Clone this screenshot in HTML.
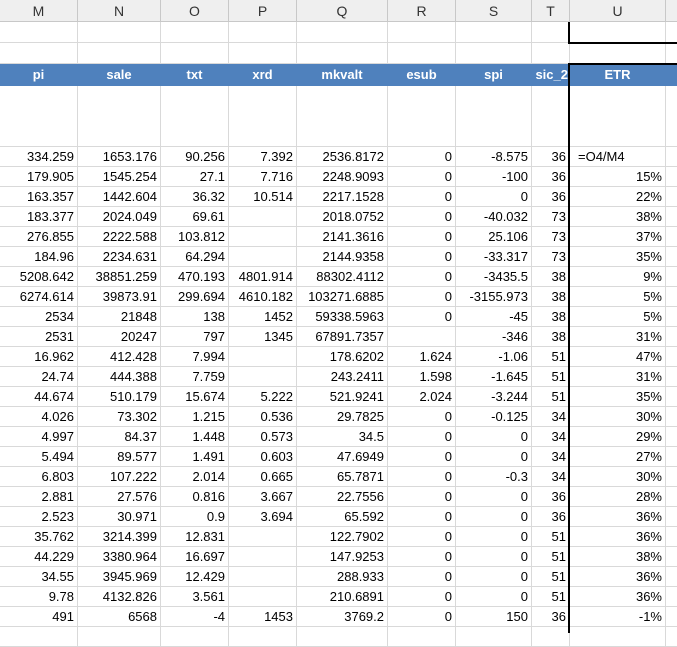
<!DOCTYPE html>
<html><head><meta charset="utf-8"><style>
body{margin:0;background:#fff;overflow:hidden;width:677px;height:633px;position:relative;font-family:"Liberation Sans",Calibri,sans-serif;font-size:13px;color:#000}
.r{display:flex;height:20px}
.r>div{box-sizing:border-box;border-right:1px solid #d9d9d9;border-bottom:1px solid #d9d9d9;text-align:right;padding:0 3px;white-space:nowrap;overflow:hidden;line-height:20px;flex:none}
.r>div:nth-child(1){width:78px}.r>div:nth-child(2){width:83px}.r>div:nth-child(3){width:68px}.r>div:nth-child(4){width:68px}.r>div:nth-child(5){width:91px}.r>div:nth-child(6){width:68px}.r>div:nth-child(7){width:76px}.r>div:nth-child(8){width:38px}.r>div:nth-child(9){width:96px}.r>div:nth-child(10){width:20px}
.t{height:21px}
.ch{height:22px}.ch>div{background:#efefef;text-align:center!important;color:#333;font-size:14px;border-color:#c8c8c8!important;line-height:22px}
.bl{height:22px}.bl>div{background:#4f81bd;color:#fff;font-weight:bold;text-align:center!important;border-color:#4f81bd!important;line-height:21px}
.big{height:61px}
.k{position:absolute;background:#000}
</style></head><body>
<div class="r ch"><div>M</div><div>N</div><div>O</div><div>P</div><div>Q</div><div>R</div><div>S</div><div>T</div><div>U</div><div></div></div>
<div class="r t"><div></div><div></div><div></div><div></div><div></div><div></div><div></div><div></div><div></div><div></div></div>
<div class="r t"><div></div><div></div><div></div><div></div><div></div><div></div><div></div><div></div><div></div><div></div></div>
<div class="r bl"><div>pi</div><div>sale</div><div>txt</div><div>xrd</div><div>mkvalt</div><div>esub</div><div>spi</div><div style="text-align:right!important;padding:0 1px">sic_2</div><div>ETR</div><div></div></div>
<div class="r big"><div></div><div></div><div></div><div></div><div></div><div></div><div></div><div></div><div></div><div></div></div>
<div class="r"><div>334.259</div><div>1653.176</div><div>90.256</div><div>7.392</div><div>2536.8172</div><div>0</div><div>-8.575</div><div>36</div><div style="text-align:left;padding-left:8px">=O4/M4</div><div></div></div>
<div class="r"><div>179.905</div><div>1545.254</div><div>27.1</div><div>7.716</div><div>2248.9093</div><div>0</div><div>-100</div><div>36</div><div>15%</div><div></div></div>
<div class="r"><div>163.357</div><div>1442.604</div><div>36.32</div><div>10.514</div><div>2217.1528</div><div>0</div><div>0</div><div>36</div><div>22%</div><div></div></div>
<div class="r"><div>183.377</div><div>2024.049</div><div>69.61</div><div></div><div>2018.0752</div><div>0</div><div>-40.032</div><div>73</div><div>38%</div><div></div></div>
<div class="r"><div>276.855</div><div>2222.588</div><div>103.812</div><div></div><div>2141.3616</div><div>0</div><div>25.106</div><div>73</div><div>37%</div><div></div></div>
<div class="r"><div>184.96</div><div>2234.631</div><div>64.294</div><div></div><div>2144.9358</div><div>0</div><div>-33.317</div><div>73</div><div>35%</div><div></div></div>
<div class="r"><div>5208.642</div><div>38851.259</div><div>470.193</div><div>4801.914</div><div>88302.4112</div><div>0</div><div>-3435.5</div><div>38</div><div>9%</div><div></div></div>
<div class="r"><div>6274.614</div><div>39873.91</div><div>299.694</div><div>4610.182</div><div>103271.6885</div><div>0</div><div>-3155.973</div><div>38</div><div>5%</div><div></div></div>
<div class="r"><div>2534</div><div>21848</div><div>138</div><div>1452</div><div>59338.5963</div><div>0</div><div>-45</div><div>38</div><div>5%</div><div></div></div>
<div class="r"><div>2531</div><div>20247</div><div>797</div><div>1345</div><div>67891.7357</div><div></div><div>-346</div><div>38</div><div>31%</div><div></div></div>
<div class="r"><div>16.962</div><div>412.428</div><div>7.994</div><div></div><div>178.6202</div><div>1.624</div><div>-1.06</div><div>51</div><div>47%</div><div></div></div>
<div class="r"><div>24.74</div><div>444.388</div><div>7.759</div><div></div><div>243.2411</div><div>1.598</div><div>-1.645</div><div>51</div><div>31%</div><div></div></div>
<div class="r"><div>44.674</div><div>510.179</div><div>15.674</div><div>5.222</div><div>521.9241</div><div>2.024</div><div>-3.244</div><div>51</div><div>35%</div><div></div></div>
<div class="r"><div>4.026</div><div>73.302</div><div>1.215</div><div>0.536</div><div>29.7825</div><div>0</div><div>-0.125</div><div>34</div><div>30%</div><div></div></div>
<div class="r"><div>4.997</div><div>84.37</div><div>1.448</div><div>0.573</div><div>34.5</div><div>0</div><div>0</div><div>34</div><div>29%</div><div></div></div>
<div class="r"><div>5.494</div><div>89.577</div><div>1.491</div><div>0.603</div><div>47.6949</div><div>0</div><div>0</div><div>34</div><div>27%</div><div></div></div>
<div class="r"><div>6.803</div><div>107.222</div><div>2.014</div><div>0.665</div><div>65.7871</div><div>0</div><div>-0.3</div><div>34</div><div>30%</div><div></div></div>
<div class="r"><div>2.881</div><div>27.576</div><div>0.816</div><div>3.667</div><div>22.7556</div><div>0</div><div>0</div><div>36</div><div>28%</div><div></div></div>
<div class="r"><div>2.523</div><div>30.971</div><div>0.9</div><div>3.694</div><div>65.592</div><div>0</div><div>0</div><div>36</div><div>36%</div><div></div></div>
<div class="r"><div>35.762</div><div>3214.399</div><div>12.831</div><div></div><div>122.7902</div><div>0</div><div>0</div><div>51</div><div>36%</div><div></div></div>
<div class="r"><div>44.229</div><div>3380.964</div><div>16.697</div><div></div><div>147.9253</div><div>0</div><div>0</div><div>51</div><div>38%</div><div></div></div>
<div class="r"><div>34.55</div><div>3945.969</div><div>12.429</div><div></div><div>288.933</div><div>0</div><div>0</div><div>51</div><div>36%</div><div></div></div>
<div class="r"><div>9.78</div><div>4132.826</div><div>3.561</div><div></div><div>210.6891</div><div>0</div><div>0</div><div>51</div><div>36%</div><div></div></div>
<div class="r"><div>491</div><div>6568</div><div>-4</div><div>1453</div><div>3769.2</div><div>0</div><div>150</div><div>36</div><div>-1%</div><div></div></div>
<div class="r"><div></div><div></div><div></div><div></div><div></div><div></div><div></div><div></div><div></div><div></div></div>
<div class="k" style="left:568px;top:22px;width:2px;height:22px"></div>
<div class="k" style="left:568px;top:42px;width:109px;height:2px"></div>
<div class="k" style="left:568px;top:63px;width:2px;height:570px"></div>
<div class="k" style="left:568px;top:63px;width:109px;height:2px"></div>
</body></html>
